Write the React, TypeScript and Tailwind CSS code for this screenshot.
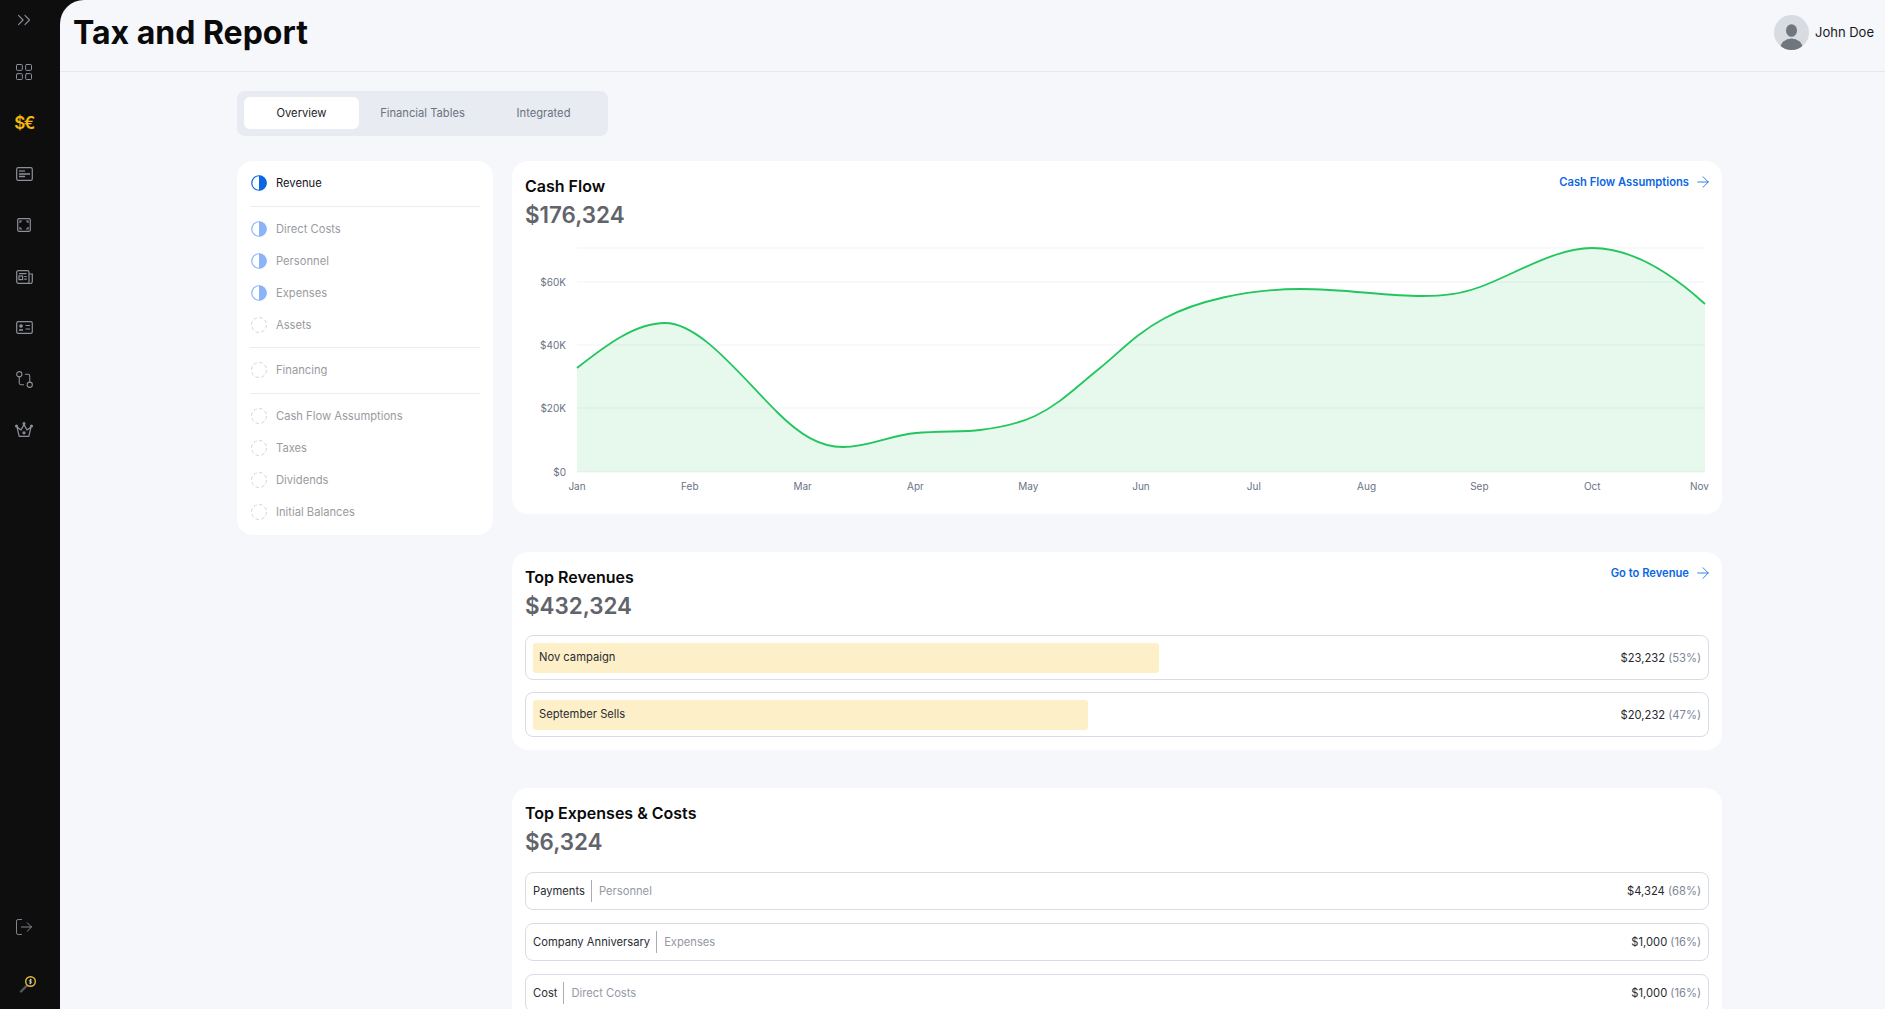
import { ArrowRight, ChevronsRight, GitCompare, LayoutGrid, LogOut } from "lucide-react";

const font = { fontFamily: '"Inter", "Liberation Sans", sans-serif' };

// traced from the chart, origin at the card's inner left, y = 240
const linePath =
	"M52 128 C80 106 110 83 140 83 C175 83 215 135 252 172 C275 195 295 207 318 207 C345 207 365 195 391 193 C415 191 440 192 455 190 C480 187 495 183 510 176 C535 164 550 148 575 128 C595 112 610 94 640 78 C670 62 720 49 776 49 C820 49 860 56 896 56 C920 56 935 54 955 47 C990 34 1030 8 1067 8 C1105 8 1145 32 1180 64";

const gridLines = [
	{ y: 8, label: "" },
	{ y: 42, label: "$60K" },
	{ y: 105, label: "$40K" },
	{ y: 168, label: "$20K" },
	{ y: 232, label: "$0" },
];
const months = ["Jan", "Feb", "Mar", "Apr", "May", "Jun", "Jul", "Aug", "Sep", "Oct"];

const menuGroups = [
	[{ label: "Revenue", state: "active" }],
	[
		{ label: "Direct Costs", state: "half" },
		{ label: "Personnel", state: "half" },
		{ label: "Expenses", state: "half" },
		{ label: "Assets", state: "empty" },
	],
	[{ label: "Financing", state: "empty" }],
	[
		{ label: "Cash Flow Assumptions", state: "empty" },
		{ label: "Taxes", state: "empty" },
		{ label: "Dividends", state: "empty" },
		{ label: "Initial Balances", state: "empty" },
	],
];

const revenues = [
	{ name: "Nov campaign", width: 626, value: "$23,232", pct: "(53%)" },
	{ name: "September Sells", width: 555, value: "$20,232", pct: "(47%)" },
];

const expenses = [
	{ name: "Payments", type: "Personnel", value: "$4,324", pct: "(68%)" },
	{ name: "Company Anniversary", type: "Expenses", value: "$1,000", pct: "(16%)" },
	{ name: "Cost", type: "Direct Costs", value: "$1,000", pct: "(16%)" },
];

function StatusIcon({ state }: { state: string }) {
	if (state === "empty") {
		return (
			<svg width="16" height="16" viewBox="0 0 16 16" fill="none">
				<circle cx="8" cy="8" r="7.5" stroke="#d4d4d8" strokeWidth="1" strokeDasharray="3.5 2.4" />
			</svg>
		);
	}
	const color = state === "active" ? "#0b66e4" : "#8ab4f6";
	return (
		<svg width="16" height="16" viewBox="0 0 16 16" fill="none">
			<circle cx="8" cy="8" r="7.25" stroke={color} strokeWidth="1.2" fill="#fff" />
			<path d="M8 .5a7.5 7.5 0 0 1 0 15z" fill={color} />
		</svg>
	);
}

function NavIcon({ children }: { children: React.ReactNode }) {
	return (
		<div className="flex h-[51.25px] items-center justify-center text-[#8d9098]">{children}</div>
	);
}

function Sidebar() {
	return (
		<aside className="flex h-full w-[60px] shrink-0 flex-col bg-[#0e0e0e] pr-[12px]">
			<div className="flex h-[40px] items-center justify-center text-[#8d9098]">
				<ChevronsRight size={22} strokeWidth={1.2} />
			</div>
			<div className="mt-[6px] flex flex-col">
				<NavIcon>
					<LayoutGrid size={20} strokeWidth={1.2} />
				</NavIcon>
				<NavIcon>
					<span className="mt-px text-[17px] leading-none font-semibold tracking-[-1.5px] text-[#f5b80f]">$€</span>
				</NavIcon>
				<NavIcon>
					<svg width="17" height="14" viewBox="0 0 17 14" fill="none" stroke="currentColor" strokeWidth="1.2">
						<rect x=".7" y=".7" width="15.6" height="12.6" rx="1.6" />
						<path d="M3 4h6" />
						<path d="M3 7h11M3 9.5h6" strokeWidth="1.6" />
					</svg>
				</NavIcon>
				<NavIcon>
					<svg width="14" height="14" viewBox="0 0 14 14" fill="none" stroke="currentColor" strokeWidth="1.2">
						<rect x=".7" y=".7" width="12.6" height="12.6" rx="1.2" />
						<path d="M3 5V3h2M9 3h2v2M11 9v2H9M5 11H3V9" />
					</svg>
				</NavIcon>
				<NavIcon>
					<svg width="17" height="14" viewBox="0 0 17 14" fill="none" stroke="currentColor" strokeWidth="1.2">
						<path d="M13 13.3H2.2A1.5 1.5 0 0 1 .7 11.8V2.2A1.5 1.5 0 0 1 2.2.7h9.3A1.5 1.5 0 0 1 13 2.2v11a2.1 2.1 0 0 0 3.3-1.7V4H13" />
						<rect x="3" y="6" width="3.6" height="3.6" />
						<path d="M3 3.7h7.5M8.2 6.5h2.6M8.2 9.2h2.6" />
					</svg>
				</NavIcon>
				<NavIcon>
					<svg width="17" height="13" viewBox="0 0 17 13" fill="none" stroke="currentColor" strokeWidth="1.2">
						<rect x=".7" y=".7" width="15.6" height="11.6" rx="1.6" />
						<circle cx="5" cy="5" r="1.2" fill="currentColor" />
						<path d="M3 9h4" strokeWidth="1.6" />
						<path d="M9.5 4.5H14M9.5 8h4.5" />
					</svg>
				</NavIcon>
				<NavIcon>
					<GitCompare size={21} strokeWidth={1.2} />
				</NavIcon>
				<NavIcon>
					<svg width="18" height="16" viewBox="0 0 18 16" fill="none" stroke="currentColor" strokeWidth="1.2">
						<path d="M2 5l2.2 9.3h9.6L16 5l-4 3-3-5.4L6 8z" strokeLinejoin="round" />
						<circle cx="9" cy="1.6" r=".9" fill="currentColor" />
						<circle cx="1.5" cy="4" r=".9" fill="currentColor" />
						<circle cx="16.5" cy="4" r=".9" fill="currentColor" />
						<circle cx="9" cy="10.8" r="1" fill="currentColor" />
					</svg>
				</NavIcon>
			</div>
			<div className="mt-auto flex flex-col items-center pb-[16px]">
				<div className="flex h-[40px] items-center justify-center text-[#8d9098]">
					<LogOut size={20} strokeWidth={1.1} />
				</div>
				<svg className="mt-[28px] ml-[8px]" width="18" height="18" viewBox="0 0 18 18" fill="none">
					<path d="M2 16.5l5.5-5.5" stroke="#55585e" strokeWidth="2.4" strokeLinecap="round" />
					<circle cx="11.5" cy="6.5" r="4.8" stroke="#e6bd2c" strokeWidth="1.4" />
					<path d="M11.5 3.8v5.4M13 4.9h-2.2a.9.9 0 0 0 0 1.6h1.4a.9.9 0 0 1 0 1.6H10" stroke="#d8d8d8" strokeWidth=".8" />
				</svg>
			</div>
		</aside>
	);
}

function LinkArrow({ label }: { label: string }) {
	return (
		<a className="-mr-[3px] flex h-4 items-center gap-[5px] text-[11.2px] leading-4 font-semibold text-[#0b66e4]">
			{label}
			<ArrowRight size={18} strokeWidth={1.1} />
		</a>
	);
}

function CardHeader({ title, amount, link }: { title: string; amount: string; link?: string }) {
	return (
		<div className="flex items-start justify-between">
			<div>
				<h2 className="text-[16px] leading-6 font-semibold text-[#0a0a0a]">{title}</h2>
				<p className="mt-px text-[22.4px] leading-8 font-semibold text-[#62646b]">{amount}</p>
			</div>
			{link && <LinkArrow label={link} />}
		</div>
	);
}

function RowValue({ value, pct }: { value: string; pct: string }) {
	return (
		<span className="text-[11.2px] leading-4 text-[#26282d]">
			{value} <span className="text-[#7d8596]">{pct}</span>
		</span>
	);
}

function CashFlowChart() {
	return (
		<svg className="mt-[9px] block" width="1184" height="256" viewBox="0 0 1184 256" fill="none">
			{gridLines.map((line) => (
				<g key={line.y}>
					<line x1="52" x2="1180" y1={line.y} y2={line.y} stroke="#f2f3f6" strokeWidth="1" />
					{line.label && (
						<text x="41" y={line.y + 3.5} textAnchor="end" fontSize="10" fill="#6b7285">
							{line.label}
						</text>
					)}
				</g>
			))}
			<path d={`${linePath} L1180 232 L52 232 Z`} fill="#22c55e" fillOpacity="0.11" />
			<path d={linePath} stroke="#22c55e" strokeWidth="1.8" />
			{months.map((month, index) => (
				<text key={month} x={52 + index * 112.8} y="249.5" textAnchor="middle" fontSize="10" fill="#6b7285">
					{month}
				</text>
			))}
			<text x="1184" y="249.5" textAnchor="end" fontSize="10" fill="#6b7285">
				Nov
			</text>
		</svg>
	);
}

export default function App() {
	return (
		<div className="flex h-screen w-full overflow-hidden bg-[#0e0e0e]" style={font}>
			<Sidebar />
			<main className="h-full min-w-0 flex-1 overflow-hidden rounded-tl-[24px] bg-[#f5f7fb]">
				{/* header */}
				<header className="flex h-[72px] items-center justify-between border-b border-[#e6e8ee] pr-[11px] pl-[13px]">
					<h1 className="-mt-[6px] text-[32px] leading-10 font-bold text-[#0a0a0a]">Tax and Report</h1>
					<div className="-mt-[6px] flex items-center gap-[6px]">
						<svg width="35" height="35" viewBox="0 0 35 35">
							<defs>
								<clipPath id="avatar">
									<circle cx="17.5" cy="17.5" r="17.5" />
								</clipPath>
							</defs>
							<circle cx="17.5" cy="17.5" r="17.5" fill="#d8dbe0" />
							<g clipPath="url(#avatar)" fill="#70767d">
								<ellipse cx="17.5" cy="15.5" rx="5.5" ry="6.3" />
								<ellipse cx="17.5" cy="33" rx="11" ry="9.5" />
							</g>
						</svg>
						<span className="text-[13px] text-[#15171c]">John Doe</span>
					</div>
				</header>

				<div className="pt-[19px] pl-[177px]">
					{/* tabs */}
					<div className="flex h-[45px] w-[371px] gap-[6px] rounded-lg bg-[#e8ebf2] pt-[6px] pb-[7px] pl-[7px]">
						<button type="button" className="w-[115px] rounded-md bg-white pt-px text-[11.2px] text-[#1f2228]">
							Overview
						</button>
						<button type="button" className="w-[115px] pt-px text-[11.2px] text-[#6b7280]">
							Financial Tables
						</button>
						<button type="button" className="w-[115px] pt-px text-[11.2px] text-[#6b7280]">
							Integrated
						</button>
					</div>

					<div className="mt-[25px] flex items-start gap-[19px]">
						{/* left menu */}
						<nav className="w-[256px] shrink-0 rounded-2xl bg-white px-[13px] pb-px">
							{menuGroups.map((group, groupIndex) => (
								<div
									key={groupIndex}
									className={`pt-[6px] ${groupIndex === 0 || groupIndex === 2 ? "pb-[7px]" : "pb-[6px]"} ${groupIndex < menuGroups.length - 1 ? "border-b border-[#eaecf1]" : ""}`}
								>
									{group.map((item) => (
										<div key={item.label} className="flex h-[32px] items-center gap-[9px] pl-[1px]">
											<StatusIcon state={item.state} />
											<span
												className={`text-[11.2px] ${item.state === "active" ? "text-[#111318]" : "text-[#9a9ba0]"}`}
											>
												{item.label}
											</span>
										</div>
									))}
								</div>
							))}
						</nav>

						<div className="flex w-[1210px] shrink-0 flex-col gap-[38px]">
							{/* cash flow */}
							<section className="rounded-2xl bg-white px-[13px] pt-[13px] pb-[18px]">
								<CardHeader title="Cash Flow" amount="$176,324" link="Cash Flow Assumptions" />
								<CashFlowChart />
							</section>

							{/* top revenues */}
							<section className="rounded-2xl bg-white px-[13px] pt-[13px] pb-[13px]">
								<CardHeader title="Top Revenues" amount="$432,324" link="Go to Revenue" />
								<div className="mt-[13px] flex flex-col gap-[12px]">
									{revenues.map((row) => (
										<div
											key={row.name}
											className="flex h-[45px] items-center justify-between rounded-lg border border-[#d9dbe6] pr-[7px] pl-[7px]"
										>
											<div
												className="flex h-[30px] items-center rounded-[3px] bg-[#fdefc8] pl-[6px] text-[11.2px] text-[#2a2c33]"
												style={{ width: row.width }}
											>
												{row.name}
											</div>
											<RowValue value={row.value} pct={row.pct} />
										</div>
									))}
								</div>
							</section>

							{/* top expenses */}
							<section className="rounded-2xl bg-white px-[13px] pt-[13px] pb-[13px]">
								<CardHeader title="Top Expenses & Costs" amount="$6,324" />
								<div className="mt-[14px] flex flex-col gap-[13px]">
									{expenses.map((row) => (
										<div
											key={row.name}
											className="flex h-[38px] items-center justify-between rounded-lg border border-[#d9dbe6] pr-[7px] pl-[7px]"
										>
											<div className="flex items-center text-[11.2px]">
												<span className="border-r border-[#a9adb8] pr-[6px] leading-[22px] text-[#2a2c33]">
													{row.name}
												</span>
												<span className="pl-[7px] text-[#9499a6]">{row.type}</span>
											</div>
											<RowValue value={row.value} pct={row.pct} />
										</div>
									))}
								</div>
							</section>
						</div>
					</div>
				</div>
			</main>
		</div>
	);
}
